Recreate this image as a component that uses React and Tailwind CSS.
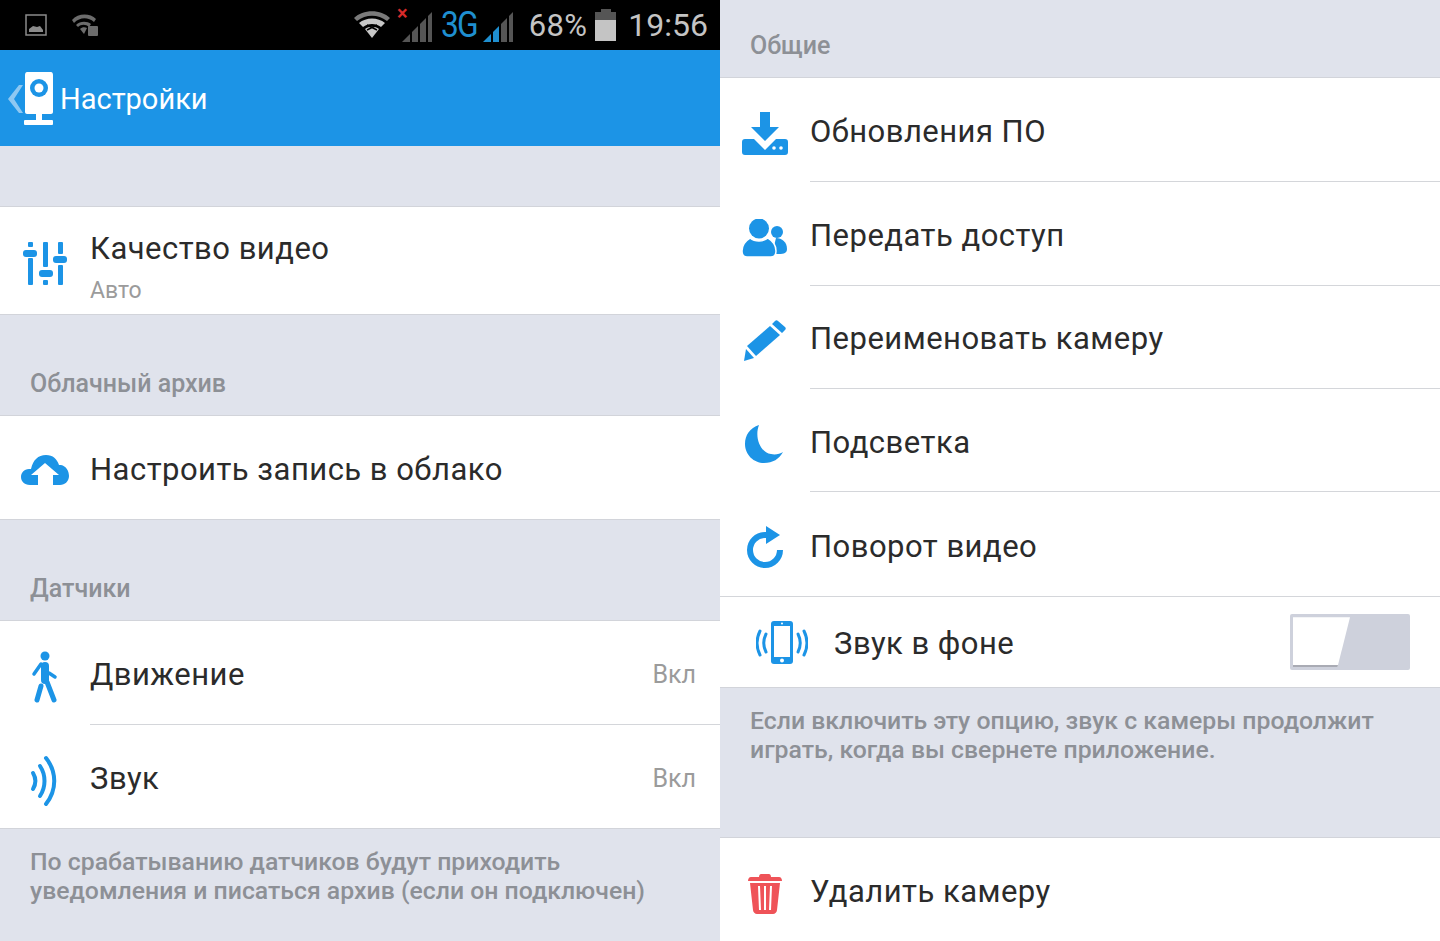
import React from 'react';

const blue = '#1c94e6';

// icons
const IconSliders = () => (
  <svg width="46" height="46" viewBox="0 0 46 46" fill={blue}>
    <rect x="6" y="1" width="5" height="5" rx="1" />
    <rect x="1" y="9" width="14" height="7" rx="3" />
    <rect x="6" y="17" width="5" height="27" rx="1" />
    <rect x="21" y="1" width="5" height="25" rx="1" />
    <rect x="17" y="29" width="14" height="7" rx="3" />
    <rect x="21" y="39" width="5" height="5" rx="1" />
    <rect x="36" y="1" width="5" height="12" rx="1" />
    <rect x="31" y="15" width="14" height="7" rx="3" />
    <rect x="36" y="24" width="5" height="20" rx="1" />
  </svg>
);

const IconCloud = () => (
  <svg width="50" height="34" viewBox="0 0 50 34" fill={blue}>
    <path d="M10 32C4 32 1 28 1 24c0-4 3-8 8-8 1 0 1 0 2 0C13 7 18 2 26 2c7 0 11 4 13 10 1 0 1 0 2 0 5 1 8 6 8 11 0 5-4 9-9 9h-7V22h6L25 10 11 22h7v10z" />
  </svg>
);

const IconWalk = () => (
  <svg width="28" height="52" viewBox="0 0 28 52" fill="none" stroke={blue} strokeLinecap="round" strokeLinejoin="round">
    <circle cx="14" cy="5" r="4.5" fill={blue} stroke="none" />
    <path d="M14 15v14" strokeWidth="8" />
    <path d="M10 13L3 23" strokeWidth="3.5" />
    <path d="M18 22l6 4" strokeWidth="3.5" />
    <path d="M16 31l7 18" strokeWidth="5" />
    <path d="M10 35L6 49" strokeWidth="5" />
  </svg>
);

const IconSound = () => (
  <svg width="30" height="52" viewBox="0 0 30 52" fill="none" stroke={blue} strokeWidth="4" strokeLinecap="round">
    <path d="M3 18c3 5 3 11 0 16" />
    <path d="M10 11c6 9 6 21 0 30" />
    <path d="M16 3c11 14 11 32 0 46" />
  </svg>
);

const IconDownload = () => (
  <svg width="46" height="44" viewBox="0 0 46 44" fill={blue}>
    <path d="M18 1h10v15h9L23 30 9 16h9z" />
    <path d="M3 28h9l11 11 11-11h9c2 0 3 1 3 3v10c0 2-1 3-3 3H3c-2 0-3-1-3-3V31c0-2 1-3 3-3z" />
    <circle cx="32" cy="37" r="1.8" fill="#fff" />
    <circle cx="39" cy="37" r="1.8" fill="#fff" />
  </svg>
);

const IconUsers = () => (
  <svg width="46" height="38" viewBox="0 0 46 38" fill={blue}>
    <circle cx="35" cy="13" r="6" />
    <path d="M34 19c6 0 11 4 11 11 0 4-3 5-8 5H30z" />
    <path d="M5 38c-3 0-5-2-5-6 0-6 3-10 8-13 5 4 13 4 18 0 5 3 8 7 8 13 0 4-2 6-5 6z" stroke="#fff" strokeWidth="1.5" />
    <circle cx="17" cy="9.5" r="10" />
  </svg>
);

const IconPencil = () => (
  <svg width="44" height="42" viewBox="0 0 44 42" fill={blue}>
    <path d="M32 1c1-1 2-1 3 0l7 6c1 1 1 2 0 3l-3 3-10-9z" />
    <path d="M27 6l10 9-24 21-9-10z" />
    <path d="M3 29l8 9-10 3z" />
  </svg>
);

const IconMoon = () => (
  <svg width="40" height="40" viewBox="0 0 40 40" fill={blue}>
    <path d="M14 1C5 4 0 11 0 20c0 11 9 19 19 19 9 0 15-4 19-11-3 2-8 3-12 2C16 29 9 14 14 1z" />
  </svg>
);

const IconRotate = () => (
  <svg width="38" height="42" viewBox="0 0 38 42" fill="none">
    <path d="M34 24a15 15 0 1 1-15-15h3" stroke={blue} strokeWidth="6" />
    <path d="M20 0l14 9-14 9z" fill={blue} />
  </svg>
);

const IconPhone = () => (
  <svg width="52" height="43" viewBox="0 0 52 43" fill="none">
    <rect x="15" y="0" width="22" height="43" rx="3" fill={blue} />
    <rect x="18" y="5" width="16" height="31" fill="#fff" />
    <circle cx="26" cy="2.5" r="1" fill="#fff" />
    <circle cx="26" cy="39.5" r="2" fill="#fff" />
    <path d="M10 13c-3 6-3 12 0 18" stroke={blue} strokeWidth="3" strokeLinecap="round" />
    <path d="M4 10c-4 8-4 16 0 24" stroke={blue} strokeWidth="3" strokeLinecap="round" />
    <path d="M42 13c3 6 3 12 0 18" stroke={blue} strokeWidth="3" strokeLinecap="round" />
    <path d="M48 10c4 8 4 16 0 24" stroke={blue} strokeWidth="3" strokeLinecap="round" />
  </svg>
);

const IconTrash = () => (
  <svg width="34" height="40" viewBox="0 0 34 40" fill="#ef5358">
    <path d="M13 0h8c1 0 2 1 2 3h8c2 0 3 2 3 4H0c0-2 1-4 3-4h8c0-2 1-3 2-3z" />
    <path fillRule="evenodd" d="M2 9h30l-3 27c0 2-2 4-4 4H9c-2 0-4-2-4-4zM10 12l1 24h2l-1-24zM16 12v24h2V12zM22 12l-1 24h2l1-24z" />
  </svg>
);

const IconCamera = () => (
  <svg width="30" height="54" viewBox="0 0 30 54" fill="#fff">
    <path d="M3 0h24c1 0 2 1 2 3v37c0 1-1 2-2 2H3c-1 0-2-1-2-2V3c0-2 1-3 2-3z" />
    <circle cx="15" cy="16" r="9" fill={blue} />
    <circle cx="15" cy="16" r="4.5" fill="#fff" />
    <rect x="12" y="42" width="6" height="7" />
    <rect x="0" y="48" width="29" height="5" rx="1" />
  </svg>
);

const Bars = ({ active }) => (
  <svg width="34" height="32" viewBox="0 0 34 32">
    <path d="M2 31L10 23v8z" fill={active ? '#1f8fd0' : '#555'} />
    <path d="M12 21l6-6v16h-6z" fill={active ? '#1f8fd0' : '#555'} />
    <path d="M20 13l6-6v24h-6z" fill="#555" />
    <path d="M28 5l4-4v30h-4z" fill="#555" />
  </svg>
);

const StatusBar = () => (
  <div className="h-[50px] bg-black flex items-center">
    <svg className="ml-[25px]" width="22" height="22" viewBox="0 0 22 22" fill="none">
      <rect x="1" y="1" width="20" height="20" stroke="#8b8b8b" strokeWidth="1.5" />
      <path d="M4 18v-3l4-3 4 1 3-1 3 4v2z" fill="#8b8b8b" />
    </svg>
    <svg className="ml-[25px]" width="26" height="22" viewBox="0 0 26 22" fill="#6c6c6c">
      <path d="M0 6C6-1 18-1 24 5l-2 3C16 3 8 3 2 9z" />
      <path d="M4 11c4-4 11-4 15-1l-2 3c-3-3-8-3-11 0z" />
      <path d="M8 15c2-2 5-2 7-1l-3 6z" />
      <rect x="16" y="12" width="10" height="10" rx="1" />
    </svg>
    <div className="ml-auto flex items-center">
      <svg width="38" height="28" viewBox="0 0 38 28" fill="#c8c8c8">
        <path d="M1 7C10-2 28-2 37 7l-3 3C25 3 13 3 4 10z" fill="#7a7a7a" />
        <path d="M6 12c7-6 19-6 26 0l-4 4c-5-4-13-4-18 0z" />
        <path d="M12 18c4-3 10-3 14 0l-7 9z" />
        <path d="M14 14l10 5M24 14l-10 5" stroke="#000" strokeWidth="1.5" />
      </svg>
      <div className="relative ml-[9px] mt-[4px]">
        <Bars />
        <span className="absolute left-[-3px] top-[-8px] text-[#d52a2a] text-[20px] font-bold leading-none">×</span>
      </div>
      <span className="ml-[2px] text-[36px] leading-none text-[#1f8fd0] tracking-[-2px] scale-x-[0.88] origin-right">3G</span>
      <div className="ml-[4px] mt-[4px]"><Bars active /></div>
      <span className="ml-[14px] text-[31px] leading-none text-[#c4c4c4] tracking-[0.3px]">68%</span>
      <div className="ml-[8px] w-[21px] h-[32px] flex flex-col items-center">
        <div className="w-[10px] h-[3px] bg-[#555]" />
        <div className="w-[21px] h-[8px] bg-[#555]" />
        <div className="w-[21px] h-[21px] bg-[#c4c4c4]" />
      </div>
      <span className="ml-[12px] mr-[12px] text-[32px] leading-none text-[#c4c4c4]">19:56</span>
    </div>
  </div>
);

const Row = ({ icon, title, value, sub, h = 'h-[104px]', divider, iconPt = 'pt-[8px]', textPt = 'pt-[6px]' }) => (
  <div className={`${h} bg-white flex`}>
    <div className={`w-[90px] shrink-0 flex items-center justify-center ${iconPt}`}>{icon}</div>
    <div className={`flex-1 flex items-center min-w-0 ${textPt} ${divider ? 'border-b border-[#d4d6da]' : ''}`}>
      <div className="flex-1">
        <div className="text-[31px] leading-[38px] text-[#2b2b2b] tracking-[0.48px]">{title}</div>
        {sub && <div className="mt-[9px] text-[23px] leading-[28px] text-[#9b9b9b]">{sub}</div>}
      </div>
      {value && <div className="mr-[24px] text-[25px] text-[#9b9b9b]">{value}</div>}
    </div>
  </div>
);

const Section = ({ h, label }) => (
  <div className={`${h} bg-[#e0e3ec] border-y border-[#d2d4da] flex items-end px-[30px] pb-[16px]`}>
    {label && <span className="text-[25px] leading-[30px] font-medium text-[#8d9096]">{label}</span>}
  </div>
);

const Note = ({ h, pt, children }) => (
  <div className={`${h} ${pt} bg-[#e0e3ec] border-t border-[#d2d4da] px-[30px] text-[24.8px] leading-[29px] font-medium text-[#8d9096]`}>
    {children}
  </div>
);

export default function App() {
  return (
    <div className="w-[1440px] h-[941px] overflow-hidden flex font-['Roboto',sans-serif]">
      <div className="w-[720px] flex flex-col">
        <StatusBar />
        <div className="h-[96px] bg-[#1c94e6] flex items-center pl-[8px] pt-[2px]">
          <svg width="15" height="28" viewBox="0 0 15 28" fill="#8ec8f2">
            <path d="M11 0h4L6 14l9 14h-4L0 14z" />
          </svg>
          <div className="ml-[1px]"><IconCamera /></div>
          <span className="ml-[6px] text-[29px] leading-none text-white">Настройки</span>
        </div>
        <div className="h-[61px] bg-[#e0e3ec] border-b border-[#d2d4da]" />
        <Row h="h-[107px]" icon={<IconSliders />} title="Качество видео" sub="Авто" iconPt="pt-[6px]" textPt="pt-[13px]" />
        <Section h="h-[102px]" label="Облачный архив" />
        <Row h="h-[103px]" icon={<IconCloud />} title="Настроить запись в облако" iconPt="pt-[4px]" textPt="pt-[4px]" />
        <Section h="h-[102px]" label="Датчики" />
        <Row icon={<IconWalk />} title="Движение" value="Вкл" divider textPt="pt-[4px]" />
        <Row h="h-[103px]" icon={<IconSound />} title="Звук" value="Вкл" textPt="pt-[4px]" />
        <Note h="flex-1" pt="pt-[18px]">
          По срабатыванию датчиков будут приходить<br />
          уведомления и писаться архив (если он подключен)
        </Note>
      </div>
      <div className="w-[720px] flex flex-col">
        <div className="h-[78px] bg-[#e0e3ec] border-b border-[#d2d4da] flex items-end px-[30px] pb-[16px]">
          <span className="text-[25px] leading-[30px] font-medium text-[#8d9096]">Общие</span>
        </div>
        <Row icon={<IconDownload />} title="Обновления ПО" divider iconPt="pt-[6px]" />
        <Row icon={<IconUsers />} title="Передать доступ" divider />
        <Row h="h-[103px]" icon={<IconPencil />} title="Переименовать камеру" divider textPt="pt-[4px]" />
        <Row icon={<IconMoon />} title="Подсветка" divider />
        <Row icon={<IconRotate />} title="Поворот видео" iconPt="pt-[6px]" />
        <div className="h-[91px] bg-white border-t border-[#d4d6da] flex items-center">
          <div className="ml-[36px]"><IconPhone /></div>
          <span className="ml-[26px] pt-[2px] text-[31px] leading-none text-[#2b2b2b] tracking-[0.48px]">Звук в фоне</span>
          <div className="ml-auto mr-[30px] w-[120px] h-[56px] bg-[#ced1dc] rounded-[2px] p-[3px]">
            <div className="w-[57px] h-[50px] bg-white border-b-2 border-[#a9abb4] [clip-path:polygon(0_0,100%_0,78%_100%,0_100%)]" />
          </div>
        </div>
        <Note h="h-[150px]" pt="pt-[18px]">
          Если включить эту опцию, звук с камеры продолжит<br />
          играть, когда вы свернете приложение.
        </Note>
        <div className="border-t border-[#d2d4da]">
          <Row h="h-[103px]" icon={<IconTrash />} title="Удалить камеру" textPt="pt-[4px]" />
        </div>
      </div>
    </div>
  );
}
